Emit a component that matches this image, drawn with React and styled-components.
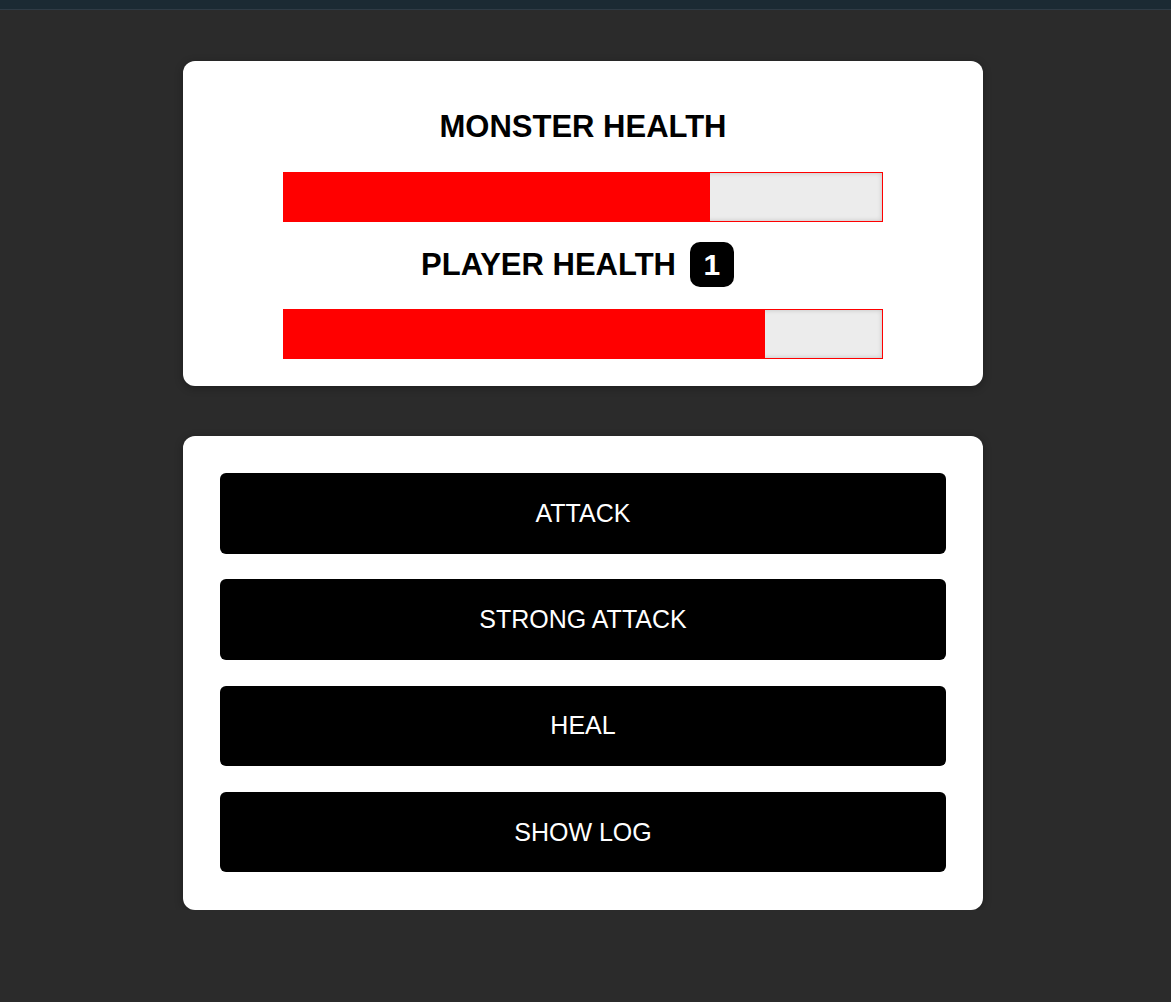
import styled, { createGlobalStyle } from "styled-components";

const GlobalStyle = createGlobalStyle`
  html, body {
    margin: 0;
    padding: 0;
    background: #2b2b2b;
    font-family: "Liberation Sans", Arial, sans-serif;
  }
`;

export default function App() {
  const monster = 71.2;
  const player = 80.5;
  return (
    <>
      <GlobalStyle />
      <TopBar />
      <Main>
        <Card>
          <Heading>MONSTER HEALTH</Heading>
          <HealthBar>
            <HealthValue style={{ width: `${monster}%` }} />
          </HealthBar>
          <HeadingRow>
            <Heading>PLAYER HEALTH</Heading>
            <Badge>1</Badge>
          </HeadingRow>
          <HealthBar $gap={22}>
            <HealthValue style={{ width: `${player}%` }} />
          </HealthBar>
        </Card>
        <Controls>
          <Button>ATTACK</Button>
          <Button>STRONG ATTACK</Button>
          <Button>HEAL</Button>
          <Button>SHOW LOG</Button>
        </Controls>
      </Main>
    </>
  );
}

const TopBar = styled.header`
  height: 9px;
  background: #1b2a33;
  border-bottom: 1px solid #2f3b45;
`;

const Main = styled.main`
  width: 800px;
  margin: 51px 0 0 183px;
  display: flex;
  flex-direction: column;
  gap: 50px;
`;

const Card = styled.section`
  background: #fff;
  border-radius: 12px;
  box-shadow: 0 2px 8px rgba(0, 0, 0, 0.3);
  padding: 48px 0 27px;
  display: flex;
  flex-direction: column;
  align-items: center;
`;

const Heading = styled.h2`
  margin: 0;
  font-size: 31px;
  line-height: 36px;
  font-weight: 700;
  color: #000;
`;

const HeadingRow = styled.div`
  height: 45px;
  margin-top: 20px;
  display: flex;
  align-items: center;
  gap: 14px;
`;

const Badge = styled.span`
  width: 44px;
  height: 45px;
  margin-right: 11px;
  border-radius: 10px;
  background: #000;
  color: #fff;
  font-size: 30px;
  font-weight: 700;
  display: flex;
  align-items: center;
  justify-content: center;
`;

const HealthBar = styled.div`
  box-sizing: border-box;
  width: 600px;
  height: 50px;
  margin-top: ${(p) => p.$gap ?? 27}px;
  border: 1px solid #ff0000;
  background: #ececec;
  box-shadow: inset 0 0 5px rgba(0, 0, 0, 0.18);
  display: flex;
`;

const HealthValue = styled.div`
  height: 100%;
  background: #ff0000;
`;

const Controls = styled(Card)`
  padding: 37px 37px 37.5px;
  align-items: stretch;
  gap: 25.7px;
`;

const Button = styled.button`
  height: 80.6px;
  border: none;
  border-radius: 6px;
  background: #000;
  color: #fff;
  font-family: "Liberation Sans", Arial, sans-serif;
  font-size: 25px;
  cursor: pointer;
`;
